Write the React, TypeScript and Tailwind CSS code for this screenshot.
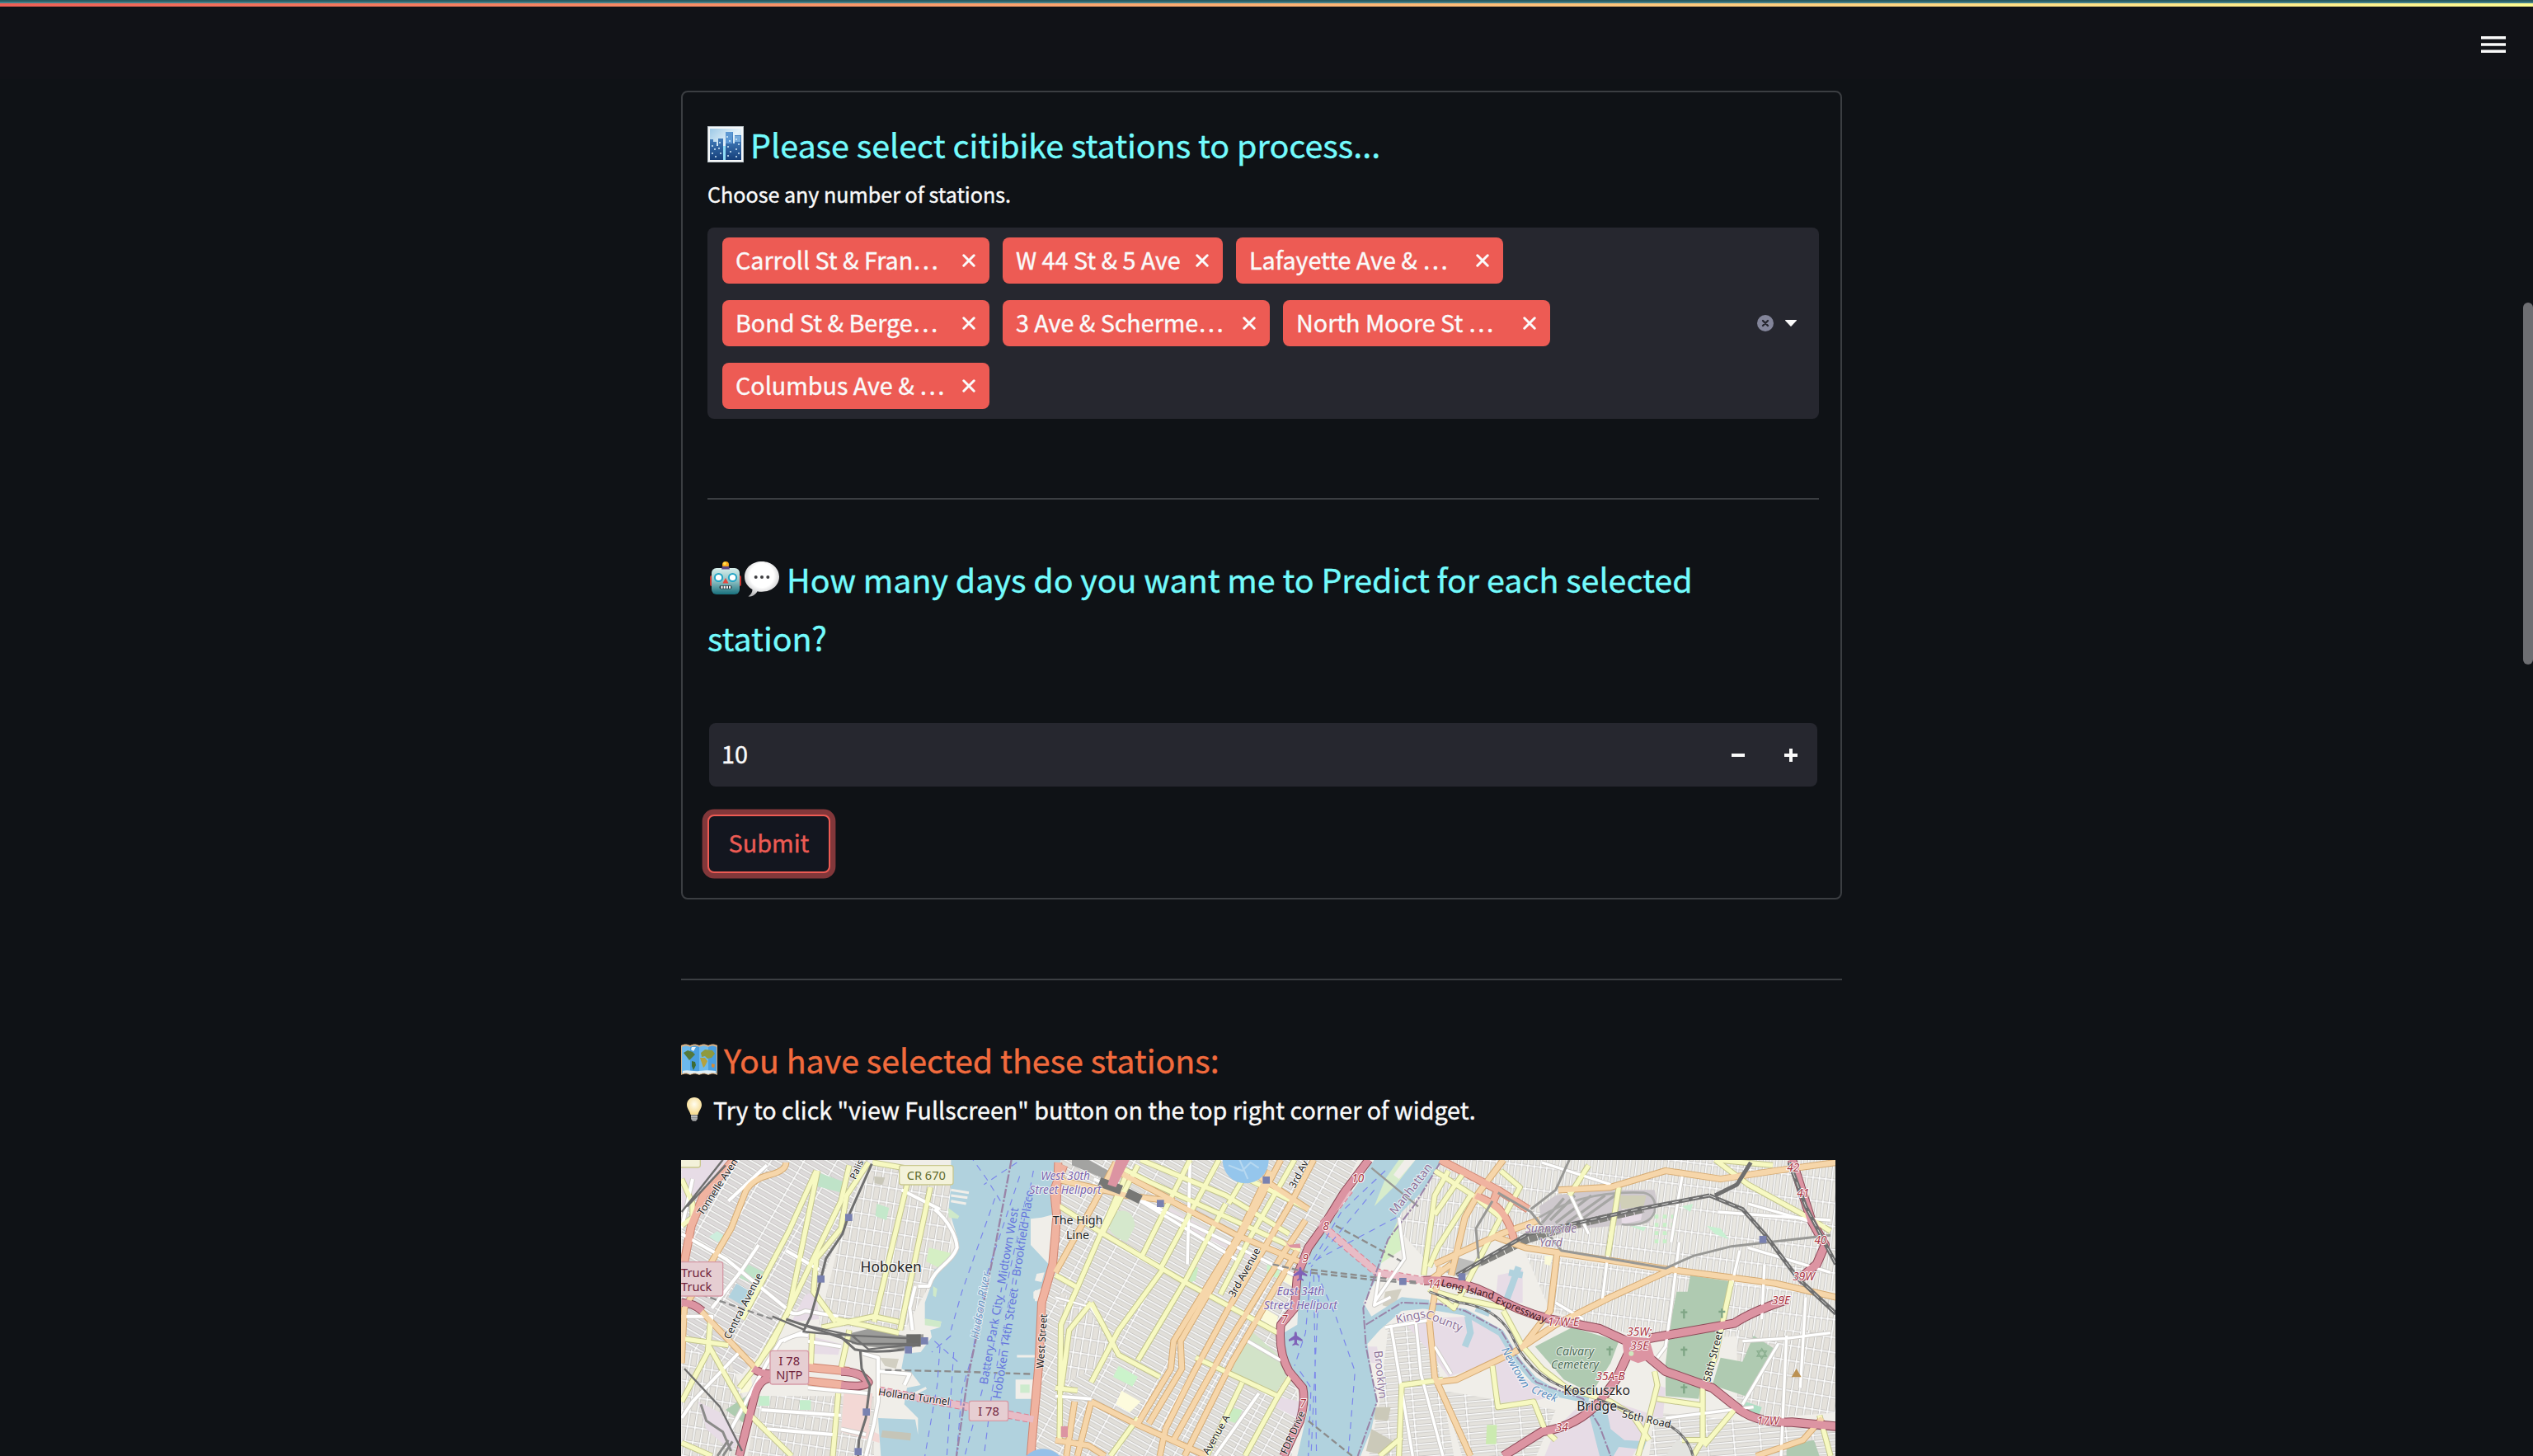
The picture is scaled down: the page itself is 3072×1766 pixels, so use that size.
import type { ReactNode } from "react";

/* ---------- emoji artwork ---------- */

function CityEmoji() {
  return (
    <svg className="h-11 w-11 shrink-0" viewBox="0 0 44 44">
      <defs>
        <linearGradient id="citySky" x1="0" y1="0" x2="1" y2="1">
          <stop offset="0" stopColor="#9cc8e6" />
          <stop offset="0.5" stopColor="#e4f2fa" />
          <stop offset="1" stopColor="#8fbfe0" />
        </linearGradient>
        <linearGradient id="cityTower" x1="0" y1="0" x2="0" y2="1">
          <stop offset="0" stopColor="#4f8fce" />
          <stop offset="1" stopColor="#153f7a" />
        </linearGradient>
      </defs>
      <rect x="0.5" y="0.5" width="43" height="43" fill="#f5f7f8" stroke="#b9c2c8" />
      <rect x="3" y="3" width="38" height="38" fill="url(#citySky)" />
      <path d="M3 41V16h4v3h4v5h2v-9h6v9h3V7h9v14h2V11h8v30z" fill="url(#cityTower)" />
      <path d="M22 7h8v14h-8z" fill="#5d98d3" />
      <path d="M33 12h7v7h-7z" fill="#76abdc" />
      <path d="M19 24h3v17h-3z" fill="#8fdcf5" />
      <path
        d="M5 24h2M8 28h2M5 33h2M14 20h2M13 27h2M15 33h2M24 12v2M27 17v2M24 25h2M27 31h2M24 36h2M34 16h2M37 22h2M34 28h2M37 33h2M34 37h2M9 37h2"
        stroke="#d3ebfa"
        strokeWidth="1.6"
      />
    </svg>
  );
}

function RobotEmoji() {
  return (
    <svg className="h-11 w-11 shrink-0" viewBox="0 0 44 44">
      <defs>
        <linearGradient id="robotHead" x1="0" y1="0" x2="0" y2="1">
          <stop offset="0" stopColor="#d8efec" />
          <stop offset="0.5" stopColor="#8dbfc2" />
          <stop offset="1" stopColor="#17707d" />
        </linearGradient>
      </defs>
      <rect x="3" y="18" width="4" height="13" rx="2" fill="#c9352f" />
      <rect x="37" y="18" width="4" height="13" rx="2" fill="#c9352f" />
      <circle cx="22" cy="5" r="4" fill="#fba81c" />
      <circle cx="21" cy="3.6" r="1.8" fill="#ffdf55" />
      <rect x="5" y="9" width="34" height="32" rx="6" fill="url(#robotHead)" />
      <path d="M17 10.500h10l-1-3.500h-8z" fill="#5a437f" />
      <circle cx="13.500" cy="20.500" r="4.600" fill="#fff" stroke="#23a4c4" strokeWidth="2" />
      <circle cx="30.500" cy="20.500" r="4.600" fill="#fff" stroke="#23a4c4" strokeWidth="2" />
      <path d="M22 21l3.600 6.500h-7.200z" fill="#e5493f" />
      <rect x="14.500" y="30" width="15" height="4.500" rx="2" fill="#2c3c42" />
      <path d="M16.500 32.200h2M19.700 32.200h2M22.900 32.200h2M26.100 32.200h2" stroke="#fff" strokeWidth="3" />
    </svg>
  );
}

function BubbleEmoji() {
  return (
    <svg className="h-11 w-11 shrink-0" viewBox="0 0 44 44">
      <defs>
        <radialGradient id="bubbleFill" cx="0.5" cy="0.4" r="0.62">
          <stop offset="0.55" stopColor="#ffffff" />
          <stop offset="1" stopColor="#b9b9bb" />
        </radialGradient>
      </defs>
      <path
        d="M22 1C10 1 1 9 1 19.500c0 7 4 12.500 9.500 15.500 0 3-1.500 6-5 8.500 4 .5 8.500-2 11-6.300 1.800.4 3.600.5 5.500.5 12 0 21-8 21-18.200S34 1 22 1z"
        fill="url(#bubbleFill)"
      />
      <circle cx="14.700" cy="20" r="2" fill="#3f3f42" />
      <circle cx="22" cy="20" r="2" fill="#3f3f42" />
      <circle cx="29.300" cy="20" r="2" fill="#3f3f42" />
    </svg>
  );
}

function WorldMapEmoji() {
  return (
    <svg className="h-11 w-11 shrink-0" viewBox="0 0 44 44">
      <path d="M0 3c4-2 7-2 11 0 4-2 7-2 11 0 4-2 7-2 11 0 4-2 7-2 11 0v36c-4-2-7-2-11 0-4-2-7-2-11 0-4-2-7-2-11 0-4-2-7-2-11 0z" fill="#d9b184" />
      <path d="M1 5c4-2 6-2 10 0v32c-4-2-6-2-10 0z" fill="#6db9ec" />
      <path d="M11 5c4-2 7-2 11 0v32c-4-2-7-2-11 0z" fill="#4a9fe0" />
      <path d="M22 5c4-2 7-2 11 0v32c-4-2-7-2-11 0z" fill="#6db9ec" />
      <path d="M33 5c4-2 6-2 10 0v32c-4-2-6-2-10 0z" fill="#4a9fe0" />
      <path d="M3 12l5-3 6 2 3 3-4 4-3 3-3-4z" fill="#54793a" />
      <path d="M13 22l4 1 1 4-3 6-2-5z" fill="#3e6b32" />
      <path d="M24 12l5-4 9 1 3 4-4 5-5 1-3-3-4 1z" fill="#8f9a3f" />
      <path d="M23 18l6 0 3 4-3 6-2 2-2-6z" fill="#b5a23f" />
      <path d="M37 25l4 1-1 4-3-1z" fill="#d98a32" />
      <path d="M13 5l5 0-3 5-3-2z" fill="#e8f1f5" />
      <path d="M2 34c7-2 12 1 20 0s14-1 20 0v3c-3-1-6-1-9 1-4-2-7-2-11 0-4-2-7-2-11 0-3-2-6-2-9-1z" fill="#dfeef6" />
    </svg>
  );
}

function BulbEmoji() {
  return (
    <svg className="h-8 w-8 shrink-0" viewBox="0 0 32 32">
      <defs>
        <radialGradient id="bulbGlass" cx="0.5" cy="0.4" r="0.6">
          <stop offset="0" stopColor="#fffdf0" />
          <stop offset="1" stopColor="#f6d98b" />
        </radialGradient>
      </defs>
      <path d="M16 1c-5.500 0-9 4-9 9 0 4.500 3 6.500 4.500 12h9C22 16.500 25 14.500 25 10c0-5-3.500-9-9-9z" fill="url(#bulbGlass)" />
      <path d="M12 22h8v5l-2 3h-4l-2-3z" fill="#8d8f90" />
      <path d="M12 24.500h8M12.500 27h7" stroke="#c9cbcc" strokeWidth="1" />
    </svg>
  );
}

/* ---------- form parts ---------- */

function Tag({ label, width }: { label: string; width: string }) {
  return (
    <div className={`flex h-14 items-center justify-between rounded-lg bg-[#ed5b54] pl-4 pr-[17px] ${width}`}>
      <span className="whitespace-nowrap pb-[3px] text-[28.700px] leading-[53px] text-[#fafafa]">{label}</span>
      <svg className="h-4 w-4 shrink-0" viewBox="0 0 16 16" fill="none" stroke="#fafafa" strokeWidth="3" strokeLinecap="round">
        <path d="M1.800 1.800l12.400 12.400M14.200 1.800L1.800 14.200" />
      </svg>
    </div>
  );
}

/* ---------- street map ---------- */

type Kind =
  | "white" | "lane" | "yellow" | "orange" | "trunk" | "motorway" | "tunnel" | "rail" | "subway" | "railDash" | "water" | "ferry" | "border";

const ROAD: Record<Kind, { casing?: string; color: string; w: number; dash?: string }> = {
  water: { color: "#b1d2de", w: 26 },
  lane: { casing: "#d3d1cd", color: "#ffffff", w: 7 },
  white: { casing: "#cfcdc9", color: "#ffffff", w: 12 },
  yellow: { casing: "#c3c58c", color: "#f7f9c2", w: 16 },
  orange: { casing: "#d5aa72", color: "#f6d6aa", w: 18 },
  trunk: { casing: "#cf8571", color: "#f0b3a0", w: 26 },
  motorway: { casing: "#8c4a58", color: "#dc94a2", w: 26 },
  tunnel: { casing: "#dc7f92", color: "#e8bcc6", w: 24 },
  rail: { color: "#6f6f6f", w: 8 },
  subway: { color: "#989895", w: 8 },
  railDash: { color: "#8c8c8c", w: 7, dash: "24 12" },
  ferry: { color: "#7a84ec", w: 3.5, dash: "24 20" },
  border: { color: "#9a84a8", w: 6, dash: "34 6 8 6" },
};

/* Coordinates are thirds of a pixel; x grows east from the map's left edge. */
const ROADS: [Kind, string, number?][] = [
  // New Jersey
  ["white", "M20 290L180 380L400 560M60 90L20 270M230 720L60 900L20 960M20 590H130L120 680M130 560L240 420L300 330M200 1000L330 760L380 680L480 640M310 930L600 950M330 1000L570 1020M480 850L700 870M400 350L520 420M190 170L330 40"],
  ["white", "M940 200C990 240 1020 300 1022 340C1000 400 940 410 920 480L880 480M690 1098L720 980L735 900L735 740L680 725M600 1000L690 1020M740 790L850 800L830 840M820 130L960 200M860 640L850 560L870 480", 12],
  ["white", "M410 570Q430 590 470 570L590 590M390 680Q430 650 480 660M480 680L600 700"],
  ["yellow", "M20 90L60 180L60 230L20 260M510 60L410 280L240 600M515 60L410 570L300 760L230 850M700 30L620 150L600 270L510 380L500 500L580 610"],
  ["yellow", "M630 40L600 170L480 420L350 690L290 770M840 110L720 610M925 120L815 640M530 630L720 590L810 610M580 600L810 650M715 30L830 50M20 670L190 695M125 600L115 720L20 900M115 690L250 930L420 1098M20 1050L130 1098M590 870L570 1098M630 640L600 780M495 650L490 770"],
  ["orange", "M400 30Q400 60 340 75Q280 90 255 130L200 270L130 390L30 560L20 760M90 570L290 780"],
  ["trunk", "M210 20L100 150L55 260L30 390M480 775L630 790M480 825L610 840M1410 40L1375 130L1385 230L1370 400L1330 540L1320 760L1300 980L1290 1098"],
  ["motorway", "M20 540Q60 540 95 570M280 780Q310 800 350 800M600 790Q670 790 700 830Q690 850 600 840M340 815Q300 820 285 880L230 1098"],
  ["tunnel", "M740 860L1040 915L1300 965"],
  ["rail", "M170 20L20 210M180 40L40 190M30 780L160 920L240 1080", 7],
  ["rail", "M712 35L625 230L605 290L545 380L515 500L490 590L465 640M400 600L520 640L600 665L650 710Q720 725 830 710M670 715L675 780L705 840L690 960L665 1040L662 1098", 9],
  ["rail", "M350 590L470 640M460 645L560 655L850 670M560 655L660 690L860 690M460 620L640 660L700 710L880 690", 7],
  ["railDash", "M90 510L350 600M760 785L1000 790L1300 800"],
  ["ferry", "M1160 160L1040 500L1000 640M1250 80L1130 440L1075 740M1270 170L1140 760L1050 1098M960 700L950 840L905 1098M1010 720L985 1098M1080 720L1040 860L1020 1098M1180 170L1130 90L1080 20M1300 60L1150 860L1120 1098M1240 30L1120 110M1000 660L930 720M940 680L1030 760"],
  ["border", "M1220 20L1160 340L1060 820L1020 1098", 7],
  // Manhattan cross streets and avenues
  ["white", "M1520 90L1720 180L2250 440M1870 20L1860 400M1640 140L2050 390M1380 880L1510 890M2120 870L1960 1098M2080 680L2200 750", 11],
  ["white", "M1380 520L1520 560M1510 560L1600 700", 7],
  ["yellow", "M1380 180L1555 290L1850 465L2190 650M1380 440L1460 485L1640 70M1690 20L2000 150L2230 290M1620 50L1720 100L2270 350M1460 485L1400 620L1395 1040M1510 540L1430 640L1400 860M1510 540L1610 730L1760 810M1550 290L1680 40M1690 380L1870 20M1760 420L1975 20M1850 465L2000 180"],
  ["yellow", "M1510 830L1610 640L1770 420M1680 750L1850 465M1980 510L2090 300L2250 20M1890 740L2190 880L2240 800M2060 830L1930 1098M2190 880L2070 1098M1380 850L1460 860M1580 1098L1680 960M2010 180L2080 60M2080 90L2300 200"],
  ["orange", "M1380 90L1640 150L1800 170L2030 290L2290 400M1380 430L1520 180L1600 30M1680 980L1800 780L1810 680L2050 290L2160 60M1720 980L1840 780L1835 680L1940 500L2080 250L2200 20", 18],
  ["orange", "M1780 1000L1880 800L2010 560L2230 190L2320 20M1810 1040L2000 700L2210 360L2290 240M1510 900L1670 980L1930 1098M1510 900L1460 1098M1450 900L1420 1098M1780 1000L1760 1098M1850 1098L2020 760L2260 350M1380 1040L1500 1060L1560 1098M1600 60L1810 170M2120 80L2300 200"],
  ["trunk", "M1390 30L1380 320", 24],
  ["tunnel", "M2450 130L2350 260L2550 430L2720 460"],
  ["motorway", "M2520 20L2430 140L2350 270L2300 340L2260 440L2250 560L2200 620Q2190 720 2230 790L2280 850Q2290 900 2270 970L2210 1098"],
  ["ferry", "M2540 130L2310 410M2580 60L2420 210L2310 400M2620 230L2300 400M2310 420L2290 650L2250 770M2320 440L2330 1098M2340 440L2310 1098M2330 430L2400 590L2470 790L2445 1098M2270 790L2310 850L2300 1098"],
  ["railDash", "M2170 400L2300 430L2560 460L2700 470M2310 420L2560 450L2700 465M2400 260L2640 390M2300 970L2460 1098"],
  ["subway", "M2530 50L2700 190", 7],
  ["border", "M2780 30L2690 180L2590 310L2500 560L2510 700L2550 900L2480 1098M2510 620L2640 540L2780 545L2870 570L3000 640L3060 740L3130 830L3300 890L3360 990L3400 1098"],
  // Queens and Brooklyn
  ["white", "M2600 620L2680 1098M2690 600L2710 800L2790 1098M2630 230L2650 380L2540 540M2560 430L2540 550L2600 520M2580 630L2760 600M3245 130L3320 290M3660 80L3620 320M3650 320L3620 560L3600 700L3570 740M3400 280L3370 530M3200 540L3300 600M3400 110L3150 30M3900 180L4180 260", 10],
  ["white", "M3880 680L4038 670L4200 650M4040 660L4020 1098M3880 910L4010 690M3600 960L3920 920M4110 520L4090 850M3960 400L3950 600M3900 340L4200 430M3870 350L3840 480M3790 210L4200 240M2760 700L2820 800", 10],
  ["yellow", "M2810 60L2760 150L2720 440M2760 60L2900 150L3000 230L2830 560L2740 490M2890 150L2770 340L2740 410M2870 60L2760 220M3000 60L3070 120L3010 230M3320 40L3250 150M3430 120L3390 370M3010 570L3080 700L3150 780L3240 850L3400 900L3480 950L3540 1040"],
  ["yellow", "M3840 460L3780 740L3735 850L3735 1040L3700 1098M3560 790L3570 840L3540 960L3500 1098M3570 890L3740 915M3740 1060L3850 930M3780 20L3900 110L4120 230L4200 280M3760 1040H3660M2970 770L2990 920L3120 900L3160 1000L3200 1040M2630 1098L2640 840L2790 820M2560 1098L2640 1030M4160 950L4200 1098M3990 40L3780 20M2760 500L2830 520L3020 560"],
  ["orange", "M3210 130L3400 120L3600 60L3800 90L4000 60L4220 30M2980 300L3090 340L3620 420L4000 470L4220 520M2760 400L3000 290L3140 240M2820 440L2870 230L2920 140L3010 20M3205 360L3180 570L3080 700M3620 420L3400 520L3200 620L3050 720L2840 820L2760 830", 19],
  ["orange", "M2740 600L2760 810L2890 1098M2780 410L2740 620M4170 960L4100 1040L3930 1098M2740 460L2820 400"],
  ["trunk", "M2780 20L2990 130L2970 180L2910 150M2970 180Q3030 220 3050 320M2990 130L3100 200", 24],
  ["motorway", "M2720 460Q2840 450 2960 510Q3060 570 3180 600L3360 635L3480 690M3540 670L3850 615Q3920 570 4040 530M3480 690L3600 790L3770 850L3870 930Q3940 980 4060 975L4220 990M3480 690L3420 820L3360 900Q3280 990 3150 1010L3010 1098M4060 20L4130 240L4180 330L4150 400L4080 460", 28],
  ["subway", "M3250 20L3200 130L3110 200M2990 140L3110 210L3220 350L3600 415L3700 370L3840 335L4200 295M2970 170L2910 270L2920 380", 9],
  ["rail", "M2840 440L3100 290L3500 200L3760 150M3760 150L3880 200L3960 290L4080 450L4220 580M3780 150L3860 110L3910 30M4050 30L4110 190L4220 400", 15],
  ["rail", "M2740 500L2850 540Q3000 560 3050 680Q3120 830 3300 870M3350 890L3480 940M3600 980Q3680 1020 3700 1098", 9],
];

/* Blocks of the street grid: polygon and pattern name. */
const DISTRICTS: [string, string][] = [
  ["M20 20H700L520 480L400 600L20 300z", "gridJersey"],
  ["M20 300L400 600L240 800L20 780z", "gridJersey"],
  ["M720 40L1000 60L1000 380L920 480L830 640L520 620L600 290z", "gridHoboken"],
  ["M300 880L720 880L720 1098H260z", "gridHoboken"],
  ["M20 700L200 760L250 900L220 1098H20z", "gridHoboken"],
  ["M1400 20H2480L2280 420L2200 620L2260 880L2240 1098H1300L1340 540z", "gridManhattan"],
  ["M1395 500L1500 560L1600 740L1400 840z", "gridHoboken"],
  ["M2780 20H4220V500L3620 430L2990 300L2740 400L2600 240z", "gridQueens"],
  ["M3090 360L4220 520V640L3560 680L3180 570z", "gridQueens"],
  ["M2590 640L2740 590L2830 1098L2520 1098L2560 900z", "gridGreenpoint"],
  ["M3860 640H4220V940L3960 960L3860 930z", "gridHoboken"],
  ["M3560 940L4220 1000V1098H3540z", "gridGreenpoint"],
  ["M2790 860L3200 930L3130 1098H2860z", "gridGreenpoint"],
];

const AREAS: [string, string][] = [
  ["M20 20H190L60 160L20 200z", "#e7dce6"],
  ["M470 510L510 500L520 600L420 610z", "#e7dce6"],
  ["M480 660L600 690L590 730L480 725z", "#e7dce6"],
  ["M80 900L160 940L230 1040L200 1080L110 1000z", "#e7dce6"],
  ["M610 870H715L700 1000L740 1020L740 1050L600 1010z", "#f3d8d5"],
  ["M500 60L610 100L600 140L490 110z", "#bfe3c8"],
  ["M260 400L320 430L280 470L230 450z", "#bfe3c8"],
  ["M150 280L180 300L150 320L120 300z", "#cdeedd"],
  ["M730 180L775 195L765 240L725 225z", "#c4e8cb"],
  ["M720 80L760 85L750 112L722 105z", "#c9c7b9"],
  ["M920 340L1000 360L970 420L910 390z", "#d5efc4"],
  ["M220 470L270 500L240 550L190 520z", "#b1d2de"],
  ["M300 880H340V915H300zM450 895H490V930H450z", "#c4edcc"],
  ["M240 890L270 870L250 980L180 930z", "#aeccb0"],
  ["M270 800L280 860L230 870z", "#fbfad9"],
  ["M740 740L810 745L800 780L760 770z", "#d2cfc2"],
  ["M1600 210Q1660 190 1670 260L1640 320Q1560 290 1580 240z", "#d5e8cc"],
  ["M1610 770L1680 810L1660 845L1590 810z", "#cbf3cb"],
  ["M1620 860L1690 900L1650 940L1600 910z", "#fdfbdd"],
  ["M2090 640L2200 740L2220 810L2180 870L2020 790z", "#d2e3c8"],
  ["M2000 920L2060 930L2040 980L2010 970z", "#c9ecc2"],
  ["M1870 420L1900 410L1890 460L1860 470z", "#c9ecc2"],
  ["M2150 400L2200 410L2190 450L2150 440z", "#cbf3cb"],
  ["M2210 430L2250 440L2240 480L2210 460z", "#fbfad9"],
  ["M2140 560L2190 590L2180 640L2130 600z", "#fbfad9"],
  ["M2180 880L2270 900L2260 960L2160 910z", "#e7dce6"],
  ["M2360 170L2420 130L2430 200L2350 240z", "#e3e3df"],
  ["M3140 190L3200 150L3330 130L3560 130L3570 180L3540 250L3300 270L3150 260z", "#cfc9ce"],
  ["M3480 150L3530 150L3520 190L3440 200L3430 150z", "#d0cfb8"],
  ["M3440 200L3520 190L3510 240L3440 255z", "#e7dce6"],
  ["M2820 370L2940 400L2860 450L2800 430z", "#bdbdbb"],
  ["M2990 440L3080 420L3080 540L2980 550z", "#e7dce6"],
  ["M2640 600L2900 590L3000 660L3060 800L3200 880L3110 900L3000 900L2960 760L2810 810L2760 740z", "#e7dce6"],
  ["M3300 900L3380 890L3560 950L3480 1098L3160 1098L3200 1000z", "#e7dce6"],
  ["M3570 840L3600 850L3590 960L3540 950z", "#e7dce6"],
  ["M2510 700L2550 700L2560 760L2530 760z", "#e7dce6"],
  ["M2580 500L2640 490L2610 560L2570 550z", "#d2cfc2"],
  ["M2540 920L2600 920L2590 970L2540 965z", "#cbc9b9"],
  ["M2530 1000L2620 1050L2590 1098L2510 1080z", "#cbc9b9"],
  ["M2620 240L2650 340L2560 400L2580 320z", "#d5efc4"],
  ["M3125 700L3260 630L3430 680L3400 760L3330 870L3230 820z", "#afcab1"],
  ["M3690 440L3850 465L3800 680L3770 735L3730 840L3720 890L3600 880L3600 760L3620 600L3640 500L3680 500z", "#afcab1"],
  ["M3800 740L3880 755L3920 660L4000 710L3890 880L3770 840z", "#afcab1"],
  ["M4040 1060L4140 1040L4160 1098H4040z", "#afcab1"],
  ["M3890 900L3950 920L3940 950L3880 930z", "#aedfc5"],
  ["M3660 190L3700 180L3690 210zM3470 260L3530 265L3520 280zM3750 260L3800 270L3830 310L3780 290z", "#c8f0d2"],
  ["M3560 220h14v14h-14zM3590 220h14v14h-14zM3620 220h14v14h-14zM3560 250h14v14h-14zM3590 250h14v14h-14zM3620 250h14v14h-14zM3560 280h14v14h-14zM3590 280h14v14h-14zM3620 280h14v14h-14zM3560 310h14v14h-14zM3590 310h14v14h-14z", "#c8f0c8"],
  ["M3160 370L3190 370L3180 405L3160 400z", "#fbfad9"],
  ["M2950 985h36l-2 70h-38z", "#cbeab0"],
  ["M3600 1098L3640 1040L3700 1050L3690 1098z", "#e3e3df"],
];

const HUDSON =
  "M1000 20L1000 110L992 200L1025 310L1020 350L995 385L940 420L925 485L905 540L905 600L965 610L960 630L925 640L930 665L890 720L830 725L820 780L860 800L890 840L840 850L830 910L880 960L880 1020L870 965L735 960L745 1098H1285L1300 980L1320 800L1325 640L1340 540L1300 525V500L1345 480L1365 410L1290 330L1290 235L1330 230L1370 220L1360 140L1400 20z";
const EAST_RIVER =
  "M2540 20L2450 150L2380 250L2330 320L2270 430L2260 620L2210 650L2210 680L2225 770L2275 840L2300 920L2280 1010L2260 1098H2490L2530 1000L2550 900L2530 800L2515 690L2560 640L2640 570L2740 560L2740 530L2640 520L2530 590L2500 540L2550 450L2580 340L2640 210L2710 140L2790 20z";

type LabelProps = { x: number; y: number; size?: number; fill?: string; rotate?: number; italic?: boolean; halo?: string; children: ReactNode };

function MapLabel({ x, y, size = 42, fill = "#222", rotate = 0, italic = false, halo = "#ffffffb0", children }: LabelProps) {
  return (
    <text
      x={x}
      y={y}
      transform={`rotate(${rotate} ${x} ${y})`}
      textAnchor="middle"
      dominantBaseline="central"
      fontSize={size}
      fill={fill}
      stroke={halo}
      strokeWidth={6}
      strokeLinejoin="round"
      paintOrder="stroke"
      fontStyle={italic ? "italic" : "normal"}
    >
      {children}
    </text>
  );
}

function Shield({ x, y, w, h, green, lines }: { x: number; y: number; w: number; h: number; green?: boolean; lines: string[] }) {
  return (
    <g>
      <rect x={x} y={y} width={w} height={h} rx="8" fill={green ? "#f3f2da" : "#e6ced2"} stroke={green ? "#c9c88f" : "#d59aa6"} strokeWidth="4" />
      {lines.map((line, i) => (
        <text
          key={i}
          x={x + w / 2}
          y={y + h / 2 + (i - (lines.length - 1) / 2) * 51}
          textAnchor="middle"
          dominantBaseline="central"
          fontSize="44"
          fill={green ? "#5f6b2c" : "#70213a"}
        >
          {line}
        </text>
      ))}
    </g>
  );
}

function StreetPattern({ id, w, h, angle, block, street = "#fff" }: { id: string; w: number; h: number; angle: number; block: string; street?: string }) {
  return (
    <pattern id={id} width={w} height={h} patternUnits="userSpaceOnUse" patternTransform={`rotate(${angle})`}>
      <rect width={w} height={h} fill={street} />
      <rect x="3" y="3" width={w - 7} height={h - 7} fill={block} stroke="#c2c0bd" strokeWidth="2.500" />
    </pattern>
  );
}

function StreetMap() {
  return (
    <svg className="block h-[359px] w-[1400px]" viewBox="18 21 4200 1077" preserveAspectRatio="none" fontFamily="'Noto Sans', sans-serif">
      <defs>
        <StreetPattern id="gridJersey" w={104} h={23} angle={30} block="#dddada" />
        <StreetPattern id="gridHoboken" w={28} h={54} angle={9} block="#e4e1db" />
        <StreetPattern id="gridManhattan" w={92} h={23} angle={29} block="#e1dfda" />
        <StreetPattern id="gridQueens" w={23} h={84} angle={7} block="#e9e7e1" />
        <StreetPattern id="gridGreenpoint" w={96} h={23} angle={-5} block="#e4e2dd" />
      </defs>
      <rect x="0" y="0" width="4240" height="1110" fill="#f0eee9" />
      {DISTRICTS.map(([d, pattern]) => (
        <path key={d} d={d} fill={`url(#${pattern})`} />
      ))}
      {AREAS.map(([d, color]) => (
        <path key={d} d={d} fill={color} />
      ))}
      <path d={HUDSON} fill="#b1d2de" />
      <path d={EAST_RIVER} fill="#b1d2de" />
      <path
        d="M2720 550L2870 575L3000 650L3060 750L3120 820L3200 870L3320 895M3300 895L3350 980L3400 1040M2880 590L2890 650L2870 700M2910 560L2960 580M3010 560L3040 480L3065 410M3030 430L3080 440"
        fill="none"
        stroke="#b1d2de"
        strokeWidth="24"
      />
      <path d="M3310 900L3380 900L3400 1000L3450 1040L3530 1045L3520 1075L3430 1065L3410 1098H3360z" fill="#b1d2de" />
      {/* piers */}
      <path
        d="M1000 130L1065 140M1000 150L1060 158M1000 170L1055 180M1295 265H1370M1295 290H1365M1300 315H1360M1240 735H1310M830 890L910 850M1310 340H1350"
        stroke="#f0eee9"
        strokeWidth="9"
      />
      <path d="M1235 820H1305V890H1235zM1305 495H1340V535H1305zM1312 435L1340 430L1330 465L1305 460z" fill="#f0eee9" />
      <path d="M1252 838H1286V868H1252z" fill="#cdebcd" />
      <path d="M905 598L965 608L960 630L905 622zM935 480L950 490L945 520L935 515zM990 195L1030 225L1025 235L992 230z" fill="#cfe9c9" />
      <path d="M750 1005L855 1015L852 1042L745 1030z" fill="#c5c5b8" />
      <path d="M2690 20L2620 110L2540 190L2580 90L2630 20z" fill="#d7eccb" />
      <path d="M2690 20L2630 90L2610 75L2650 20z" fill="#f0eee9" />
      {/* rail yards */}
      <path d="M620 655L700 635L830 660L900 655V690L840 710L700 700L640 690z" fill="#9c9c9a" />
      <rect x="838" y="655" width="52" height="45" fill="#6c6c6a" />
      <path d="M90 910L110 970L170 1010L200 1080M150 1098L190 1040M170 1098L205 1045" stroke="#8b8b89" strokeWidth="9" fill="none" />
      <path d="M1440 20H1500L1590 70L1560 90L1440 40z" fill="#a3a3a1" />
      <path d="M1790 190L2120 380L2112 396L1770 225z" fill="#e6dde3" />
      <path d="M3150 250L3230 160M3180 240L3270 150M3200 250L3330 150M3240 250L3380 150M3290 240L3430 140" stroke="#a6a6a4" strokeWidth="10" />
      <path d="M3140 230Q3300 130 3520 140Q3570 150 3560 210Q3540 265 3440 255" stroke="#a9a9a7" strokeWidth="8" fill="none" />
      <path d="M2925 395L3100 310L3300 250L3520 200" stroke="#83837f" strokeWidth="26" strokeDasharray="30 3" fill="none" />
      {ROADS.map(([kind, d, w]) =>
        ROAD[kind].casing ? (
          <path key={`c${d}`} d={d} fill="none" stroke={ROAD[kind].casing} strokeWidth={(w ?? ROAD[kind].w) + 6} strokeLinejoin="round" strokeDasharray={kind === "tunnel" ? "18 10" : undefined} />
        ) : null,
      )}
      {ROADS.map(([kind, d, w]) => (
        <path key={`f${d}`} d={d} fill="none" stroke={ROAD[kind].color} strokeWidth={w ?? ROAD[kind].w} strokeLinejoin="round" strokeDasharray={ROAD[kind].dash} />
      ))}
      <path d="M1540 100L1620 130M1640 140L1690 165" stroke="#777775" strokeWidth="34" />
      <path d="M2840 440L3100 290L3500 200L3760 150M3760 150L3880 200L3960 290L4080 450L4220 580M4050 30L4110 190L4220 400M2740 500L2850 540Q3000 560 3050 680Q3120 830 3300 870M3600 980Q3680 1020 3700 1098" fill="none" stroke="#d8d8d6" strokeWidth="3" strokeDasharray="24 14" />
      <path d="M3440 660L3540 670L3560 740L3500 760L3450 740z" fill="#dc94a2" />
      <circle cx="3475" cy="725" r="9" fill="#cfe8bf" />
      <path d="M2200 300L2230 330L2270 325L2272 342L2235 340z M1600 20H1650L1600 120L1570 110zM1400 990H1425V1030H1400z" fill="#dc94a2" />
      {/* stations */}
      {[[628, 230], [527, 454], [904, 679], [845, 712], [692, 938], [662, 1082], [1762, 179], [2147, 94], [2644, 463], [2859, 446], [3954, 310]].map(([x, y]) => (
        <rect key={`${x}-${y}`} x={x - 13} y={y - 13} width="26" height="26" fill="#7981b0" />
      ))}
      {/* selected station markers */}
      <circle cx="2072" cy="22" r="84" fill="#95c6ec" />
      <path d="M2010 40L2060 60L2090 30L2120 50M2050 20L2080 90" stroke="#b7d8f0" strokeWidth="6" fill="none" />
      <circle cx="1335" cy="1158" r="86" fill="#95c0e8" />
      {/* cemeteries and landmarks */}
      {[[2667, 580], [2805, 578], [2397, 715], [2667, 716], [2667, 853]].map(([x, y]) => (
        <path key={`${x}+${y}`} transform={`translate(${x + 1000} ${y})`} d="M0 -16V18M-12 -5H12" stroke="#7fa585" strokeWidth="7" />
      ))}
      <path d="M3950 707L3967 735H3933zM3950 744L3933 716H3967z" fill="none" stroke="#8aae8f" strokeWidth="4" />
      <path d="M4076 780L4094 811H4058z" fill="#bb9152" />
      {[[2271, 436], [2254, 672]].map(([x, y]) => (
        <path key={`p${x}`} transform={`translate(${x} ${y})`} d="M0 -26C4 -26 5 -20 5 -12L25 2V9L5 3V15L12 21V25L0 21L-12 25V21L-5 15V3L-25 9V2L-5 -12C-5 -20 -4 -26 0 -26z" fill="#7f62b8" />
      ))}
      {/* place names */}
      <MapLabel x={782} y={408} size={52}>Hoboken</MapLabel>
      <MapLabel x={150} y={118} rotate={-57} size={36}>Tonnelle Aven</MapLabel>
      <MapLabel x={655} y={55} rotate={-66} size={34}>Palis</MapLabel>
      <MapLabel x={243} y={552} rotate={-63} size={37}>Central Avenue</MapLabel>
      <MapLabel x={866} y={882} rotate={8} size={37}>Holland Tunnel</MapLabel>
      <MapLabel x={1330} y={680} rotate={-86} size={37}>West Street</MapLabel>
      <MapLabel x={1105} y={550} rotate={-80} size={42} fill="#6f9bc4" italic>Hudson River</MapLabel>
      <MapLabel x={1173} y={515} rotate={-80} size={42} fill="#6474dd" halo="#b1d2de">Battery Park City – Midtown West</MapLabel>
      <MapLabel x={1224} y={510} rotate={-81} size={42} fill="#6474dd" halo="#b1d2de">Hoboken 14th Street – Brookfield Place</MapLabel>
      <MapLabel x={1416} y={76} size={41} fill="#7a64ad" italic halo="#ffffffc0">West 30th</MapLabel>
      <MapLabel x={1416} y={127} size={41} fill="#7a64ad" italic halo="#ffffffc0">Street Heliport</MapLabel>
      <MapLabel x={1461} y={238} size={43}>The High</MapLabel>
      <MapLabel x={1461} y={291} size={43}>Line</MapLabel>
      <MapLabel x={2067} y={430} rotate={-61} size={37}>3rd Avenue</MapLabel>
      <MapLabel x={2264} y={72} rotate={-62} size={36}>3rd Av</MapLabel>
      <MapLabel x={1964} y={1020} rotate={-60} size={36}>Avenue A</MapLabel>
      <MapLabel x={2243} y={1012} rotate={-66} size={36}>FDR Drive</MapLabel>
      <MapLabel x={2272} y={497} size={42} fill="#7a64ad" italic>East 34th</MapLabel>
      <MapLabel x={2272} y={547} size={42} fill="#7a64ad" italic>Street Heliport</MapLabel>
      <MapLabel x={2672} y={125} rotate={-52} size={43} fill="#8d7299">Manhattan</MapLabel>
      <MapLabel x={2565} y={802} rotate={84} size={42} fill="#8d7299">Brooklyn</MapLabel>
      <MapLabel x={2672} y={588} rotate={-12} size={42} fill="#8d7299">Kings</MapLabel>
      <MapLabel x={2795} y={604} rotate={22} size={42} fill="#8d7299">County</MapLabel>
      <MapLabel x={3183} y={269} size={42} fill="#8d7299" italic>Sunnyside</MapLabel>
      <MapLabel x={3183} y={319} size={42} fill="#8d7299" italic>Yard</MapLabel>
      <MapLabel x={3270} y={714} size={42} fill="#4a6b55" italic>Calvary</MapLabel>
      <MapLabel x={3270} y={764} size={42} fill="#4a6b55" italic>Cemetery</MapLabel>
      <MapLabel x={3531} y={962} rotate={13} size={38}>56th Road</MapLabel>
      <MapLabel x={3772} y={735} rotate={-76} size={37}>58th Street</MapLabel>
      <MapLabel x={2880} y={490} rotate={14} size={36} fill="#3c1620" halo="none">Long Island</MapLabel>
      <MapLabel x={3075} y={565} rotate={22} size={36} fill="#3c1620" halo="none">Expressway</MapLabel>
      <MapLabel x={3055} y={775} rotate={60} size={40} fill="#5a8fc0" italic>Newtown</MapLabel>
      <MapLabel x={3160} y={870} rotate={22} size={40} fill="#5a8fc0" italic>Creek</MapLabel>
      {(
        [
          [2480, 84, "10"], [2364, 260, "8"], [2290, 377, "9"], [2213, 597, "7"], [2281, 903, "7"], [2757, 468, "14"],
          [3228, 606, "17W-E"], [3505, 644, "35W;"], [3505, 694, "35E"], [3399, 805, "35A-B"], [3223, 992, "34"], [3972, 966, "17W"],
          [4020, 529, "39E"], [4103, 443, "39W"], [4164, 309, "40"], [4100, 140, "41"], [4064, 46, "42"],
        ] as [number, number, string][]
      ).map(([x, y, label]) => (
        <MapLabel key={`${x}-${y}`} x={x} y={y} size={41} fill="#a8323f" italic halo="#fffffff0">{label}</MapLabel>
      ))}
      <MapLabel x={3350} y={857} size={47}>Kosciuszko</MapLabel>
      <MapLabel x={3350} y={914} size={47}>Bridge</MapLabel>
      <Shield x={-40} y={-30} w={128} h={78} green lines={[]} />
      <Shield x={812} y={41} w={196} h={70} green lines={["CR 670"]} />
      <Shield x={-22} y={392} w={192} h={124} lines={["Truck", "Truck"]} />
      <Shield x={342} y={715} w={140} h={122} lines={["I 78", "NJTP"]} />
      <Shield x={1066} y={898} w={142} h={72} lines={["I 78"]} />
    </svg>
  );
}

/* ---------- page ---------- */

export default function App() {
  return (
    <div className="relative h-[1766px] w-full overflow-hidden bg-[#0f1216] font-['Noto_Sans_CJK_SC',sans-serif] text-[#fafafa] [-webkit-text-stroke:0.4px]">
      <header>
        <div className="h-0.5 bg-[#285a60]" />
        <div className="h-0.5 bg-[#45808a]" />
        <div className="h-1 bg-gradient-to-r from-[#ee5f56] to-[#fefc92]" />
        <div className="flex h-[88px] justify-end bg-[#111217] pr-[33px] pt-9">
          <svg className="h-5 w-[30px]" viewBox="0 0 30 20" fill="#fafafa">
            <path d="M0 0h30v3.400H0zM0 8.300h30v3.400H0zM0 16.600h30v3.400H0z" />
          </svg>
        </div>
      </header>

      <main className="ml-[826px] w-[1408px] pt-[14px]">
        <form className="rounded-lg border-2 border-[#3b3e42] px-[30px] pb-[30px] pt-[27px]" onSubmit={(e) => e.preventDefault()}>
          <h3 className="flex items-center gap-2 text-[39.450px] leading-[72px] text-[#73fbfd]">
            <CityEmoji />
            Please select citibike stations to process...
          </h3>
          <p className="mt-[3px] text-[25.100px] leading-[42px]">Choose any number of stations.</p>

          <div className="mr-[-4px] mt-5 flex h-[232px] items-center justify-between rounded-lg bg-[#26272f] py-3 pl-[18px] pr-[27px]">
            <div className="flex flex-col gap-5">
              <div className="flex gap-4">
                <Tag label="Carroll St & Fran…" width="w-[324px]" />
                <Tag label="W 44 St & 5 Ave" width="w-[267px]" />
                <Tag label="Lafayette Ave & …" width="w-[324px]" />
              </div>
              <div className="flex gap-4">
                <Tag label="Bond St & Berge…" width="w-[324px]" />
                <Tag label="3 Ave & Scherme…" width="w-[324px]" />
                <Tag label="North Moore St …" width="w-[324px]" />
              </div>
              <Tag label="Columbus Ave & …" width="w-[324px]" />
            </div>
            <div className="flex items-center gap-3.5">
              <svg className="h-5 w-5" viewBox="0 0 20 20">
                <circle cx="10" cy="10" r="10" fill="#83859a" />
                <path d="M7 7l6 6M13 7l-6 6" stroke="#26272f" strokeWidth="2.400" strokeLinecap="round" />
              </svg>
              <svg className="h-2 w-3.5" viewBox="0 0 14 8">
                <path d="M0.500 0h13a.5.500 0 0 1 .3.900L7.600 7.600a.8.800 0 0 1-1.200 0L.2.900A.5.500 0 0 1 .5 0z" fill="#fafafa" />
              </svg>
            </div>
          </div>

          <hr className="mr-[-4px] mt-24 h-0.5 border-0 bg-[#3b3e42]" />

          <h3 className="mt-[60px] text-[39.400px] leading-[71px] text-[#73fbfd]">
            <span className="flex items-center">
              <span className="flex"><RobotEmoji /><BubbleEmoji /></span>
              <span className="ml-2">How many days do you want me to Predict for each selected</span>
            </span>
            station?
          </h3>

          <div className="ml-[2px] mr-[-2px] mt-[69px] flex h-[77px] items-center justify-between rounded-lg bg-[#26272f] pl-[15px] pr-6">
            <span className="pb-1 text-[28.800px] leading-[54px]">10</span>
            <div className="flex items-center gap-12">
              <svg className="h-4 w-4" viewBox="0 0 16 16"><path d="M0 6h16v4H0z" fill="#fafafa" /></svg>
              <svg className="h-4 w-4" viewBox="0 0 16 16"><path d="M0 6h6V0h4v6h6v4h-6v6H6v-6H0z" fill="#fafafa" /></svg>
            </div>
          </div>

          <button className="mt-[34px] flex h-[71px] w-[149px] items-center justify-center rounded-lg border-2 border-[#ed5b54] bg-[#13161f] pb-1 text-[28.800px] leading-[54px] text-[#ed5b54] shadow-[0_0_0_6.400px_#82373a]">
            Submit
          </button>
        </form>

        <hr className="mt-24 h-0.5 border-0 bg-[#3b3e42]" />

        <h3 className="mt-[60px] flex items-center gap-2 text-[39.400px] leading-[72px] text-[#f26b3d]">
          <span className="pt-1"><WorldMapEmoji /></span>
          You have selected these stations:
        </h3>
        <p className="flex items-center gap-[7px] text-[28.650px] leading-[50px]">
          <BulbEmoji />
          Try to click "view Fullscreen" button on the top right corner of widget.
        </p>
        <div className="mt-9 [-webkit-text-stroke:initial]">
          <StreetMap />
        </div>
      </main>

      {/* page scrollbar */}
      <div className="absolute right-0 top-[367px] h-[439px] w-3 rounded-full bg-[#6d6e72]" />
    </div>
  );
}
